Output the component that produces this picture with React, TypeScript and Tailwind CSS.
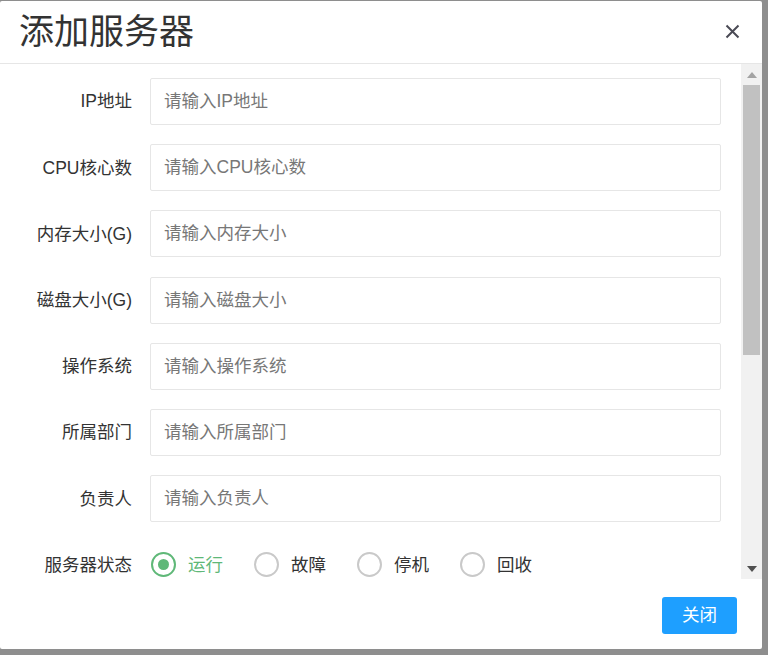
const FONT = "font-['Liberation_Sans','Noto_Sans_CJK_SC',sans-serif]";

const fields = [
  { label: "IP地址", placeholder: "请输入IP地址" },
  { label: "CPU核心数", placeholder: "请输入CPU核心数" },
  { label: "内存大小(G)", placeholder: "请输入内存大小" },
  { label: "磁盘大小(G)", placeholder: "请输入磁盘大小" },
  { label: "操作系统", placeholder: "请输入操作系统" },
  { label: "所属部门", placeholder: "请输入所属部门" },
  { label: "负责人", placeholder: "请输入负责人" },
];

const statuses = ["运行", "故障", "停机", "回收"];

function Radio({ text, checked }: { text: string; checked?: boolean }) {
  return (
    <div className="flex items-center mr-[31px]">
      <span
        className={
          "w-[25px] h-[25px] rounded-full border-2 flex items-center justify-center " +
          (checked ? "border-[#5FB878]" : "border-[#c9c9c9]")
        }
      >
        {checked && <span className="w-[11px] h-[11px] rounded-full bg-[#5FB878]" />}
      </span>
      <span className={"ml-[12px] " + (checked ? "text-[#5FB878]" : "text-[#333]")}>{text}</span>
    </div>
  );
}

function ScrollBar() {
  return (
    <div className="w-[21px] bg-[#f1f1f1] flex flex-col">
      <div className="h-[21px] flex items-center justify-center">
        <svg width="10" height="6" viewBox="0 0 10 6">
          <polygon points="0,6 10,6 5,0" fill="#a3a3a3" />
        </svg>
      </div>
      <div className="mx-[2px] h-[270px] bg-[#c1c1c1]" />
      <div className="flex-1" />
      <div className="h-[21px] flex items-center justify-center">
        <svg width="10" height="6" viewBox="0 0 10 6">
          <polygon points="0,0 10,0 5,6" fill="#505050" />
        </svg>
      </div>
    </div>
  );
}

export default function App() {
  return (
    <div className={"w-[768px] h-[655px] bg-[#8e8e8e] pt-[1px] overflow-hidden " + FONT}>
      <div className="w-[762px] h-[648px] bg-white rounded-[2px] flex flex-col">
        <div className="h-[63px] border-b border-[#e6e6e6] flex items-center justify-between pl-[19px] pr-[22px]">
          <h1 className="text-[35px] leading-none text-[#333] -mt-[1px]">添加服务器</h1>
          <svg width="15" height="15" viewBox="0 0 15 15" className="mt-[-2px]">
            <path d="M1.5 1.5 L13.5 13.5 M13.5 1.5 L1.5 13.5" stroke="#4a4a55" strokeWidth="2" />
          </svg>
        </div>

        <div className="h-[515px] flex">
          <div className="flex-1 overflow-hidden pt-[14px] flex flex-col gap-[19.2px] text-[17.5px]">
            {fields.map((f) => (
              <div key={f.label} className="flex items-center h-[47px] shrink-0">
                <label className="w-[150px] pr-[18px] text-right text-[#333]">{f.label}</label>
                <input
                  className="w-[571px] h-[47px] border border-[#e6e6e6] rounded-[2px] pl-[13px] outline-none text-[#333] placeholder:text-[#777]"
                  placeholder={f.placeholder}
                />
              </div>
            ))}
            <div className="flex items-center h-[47px] shrink-0">
              <label className="w-[150px] pr-[18px] text-right text-[#333]">服务器状态</label>
              <div className="flex items-center pl-[1px]">
                {statuses.map((s, i) => (
                  <Radio key={s} text={s} checked={i === 0} />
                ))}
              </div>
            </div>
          </div>
          <ScrollBar />
        </div>

        <div className="flex-1 flex justify-end items-start pt-[18px] pr-[25px]">
          <button className="w-[75px] h-[37px] bg-[#1E9FFF] text-white text-[17.5px] rounded-[3px]">
            关闭
          </button>
        </div>
      </div>
    </div>
  );
}
